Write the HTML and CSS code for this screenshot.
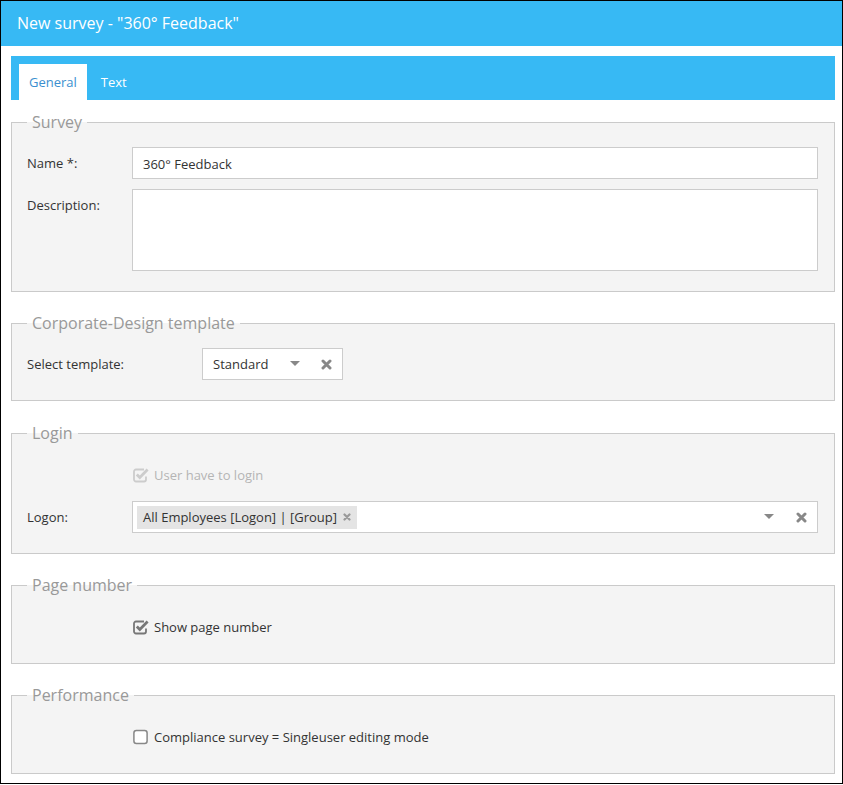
FILE: index.html
```html
<!DOCTYPE html>
<html>
<head>
<meta charset="utf-8">
<link rel="stylesheet" href="styles.css">
</head>
<body>
<div class="window">
  <div class="titlebar">New survey - "360° Feedback"</div>
  <div class="content">
    <div class="tabbar">
      <div class="tab active">General</div>
      <div class="tab">Text</div>
    </div>

    <fieldset class="group">
      <legend>Survey</legend>
      <div class="row">
        <label class="lbl">Name *:</label>
        <div class="input">360° Feedback</div>
      </div>
      <div class="row">
        <label class="lbl">Description:</label>
        <div class="textarea"></div>
      </div>
    </fieldset>

    <fieldset class="group corporate">
      <legend>Corporate-Design template</legend>
      <div class="row">
        <label class="lbl wide">Select template:</label>
        <div class="select small">
          <span class="sel-text">Standard</span>
          <svg class="caret" width="10" height="6" viewBox="0 0 10 6"><path d="M0 0h10L5 5z" fill="#888"/></svg>
          <svg class="clear" width="11" height="11" viewBox="0 0 11 11"><path d="M2 2l7 7M9 2l-7 7" stroke="#888" stroke-width="3" stroke-linecap="round"/></svg>
        </div>
      </div>
    </fieldset>

    <fieldset class="group">
      <legend>Login</legend>
      <div class="row check-row disabled">
        <svg class="cb" width="16" height="16" viewBox="0 0 16 16"><path d="M13 9.5v3a2 2 0 0 1-2 2H3a2 2 0 0 1-2-2v-8a2 2 0 0 1 2-2h8" fill="none" stroke="#ccc" stroke-width="1.8"/><path d="M3.8 7.4l3 3L14.6 2.6" fill="none" stroke="#ccc" stroke-width="2.8"/></svg>
        <span class="cb-text">User have to login</span>
      </div>
      <div class="row">
        <label class="lbl">Logon:</label>
        <div class="select full">
          <span class="tag">All Employees [Logon] | [Group]<svg class="tag-x" width="8" height="8" viewBox="0 0 8 8"><path d="M1.5 1.5l5 5M6.5 1.5l-5 5" stroke="#999" stroke-width="2.2" stroke-linecap="round"/></svg></span>
          <span class="spacer"></span>
          <svg class="caret" width="10" height="6" viewBox="0 0 10 6"><path d="M0 0h10L5 5z" fill="#888"/></svg>
          <svg class="clear" width="11" height="11" viewBox="0 0 11 11"><path d="M2 2l7 7M9 2l-7 7" stroke="#888" stroke-width="3" stroke-linecap="round"/></svg>
        </div>
      </div>
    </fieldset>

    <fieldset class="group">
      <legend>Page number</legend>
      <div class="row check-row">
        <svg class="cb" width="16" height="16" viewBox="0 0 16 16"><path d="M13 9.5v3a2 2 0 0 1-2 2H3a2 2 0 0 1-2-2v-8a2 2 0 0 1 2-2h8" fill="none" stroke="#777" stroke-width="1.8"/><path d="M3.8 7.4l3 3L14.6 2.6" fill="none" stroke="#777" stroke-width="2.8"/></svg>
        <span class="cb-text">Show page number</span>
      </div>
    </fieldset>

    <fieldset class="group">
      <legend>Performance</legend>
      <div class="row check-row">
        <svg class="cb" width="16" height="16" viewBox="0 0 16 16"><rect x="0.9" y="1.4" width="13.2" height="13.2" rx="2.5" fill="#fff" stroke="#888" stroke-width="1.5"/></svg>
        <span class="cb-text">Compliance survey = Singleuser editing mode</span>
      </div>
    </fieldset>
  </div>
</div>
</body>
</html>
```

FILE: styles.css
```css
* { box-sizing: border-box; }
html, body { margin: 0; padding: 0; background: #fff; }
body { font-family: "Open Sans", "Liberation Sans", sans-serif; font-size: 13px; color: #333; }

.window {
  width: 843px;
  height: 784px;
  border: 1px solid #000;
  background: #fff;
}

.titlebar {
  height: 45px;
  background: #37b9f4;
  color: #fff;
  font-size: 16px;
  line-height: 45px;
  padding-left: 16px;
}

.content {
  padding: 10px 7px 0 10px;
}

.tabbar {
  height: 44px;
  background: #37b9f4;
  display: flex;
  align-items: flex-end;
  padding-left: 8px;
  gap: 4px;
}
.tab {
  height: 36px;
  line-height: 36px;
  padding: 0 10px;
  color: #fff;
  font-size: 13px;
}
.tab.active {
  background: #fff;
  color: #3b8fcf;
}

.group {
  margin: 0;
  margin-top: 20px;
  border: 1px solid #cacaca;
  background: #f4f4f4;
  padding: 14px 16px 20px 15px;
}
.tabbar + .group { margin-top: 11px; }
.corporate + .group { margin-top: 21px; }
.group legend {
  font-size: 16px;
  line-height: 22px;
  color: #999;
  padding: 0 5px;
  margin-left: 0;
}

.row {
  display: flex;
  align-items: flex-start;
  margin-bottom: 10px;
}
.row:last-child { margin-bottom: 0; }

.lbl {
  width: 105px;
  flex: none;
  line-height: 32px;
  color: #333;
}
.lbl.wide { width: 175px; }

.input {
  flex: 1;
  height: 32px;
  line-height: 31px;
  padding-top: 1px;
  background: #fff;
  border: 1px solid #ccc;
  padding-left: 10px;
  color: #333;
}
.textarea {
  flex: 1;
  height: 82px;
  background: #fff;
  border: 1px solid #ccc;
}

.select {
  height: 32px;
  background: #fff;
  border: 1px solid #ccc;
  display: flex;
  align-items: center;
}
.select.small {
  width: 141px;
  padding-left: 10px;
}
.select.full {
  flex: 1;
  padding-left: 4px;
  padding-right: 10px;
}
.sel-text { width: 77px; }
.caret { flex: none; }
.select.small .caret { margin-right: 21px; }
.select.full .caret { margin-right: 22px; margin-left: 4px; }
.clear { flex: none; }

.spacer { flex: 1; }
.tag {
  background: #e4e4e4;
  height: 23px;
  line-height: 23px;
  padding: 0 6px 0 6px;
  display: flex;
  align-items: center;
  gap: 6px;
  color: #333;
}

.check-row {
  align-items: center;
  height: 33px;
  padding-left: 106px;
}
.cb { flex: none; margin-right: 5px; }
.cb-text { color: #333; }
.disabled .cb-text { color: #b5b5b5; }
```
